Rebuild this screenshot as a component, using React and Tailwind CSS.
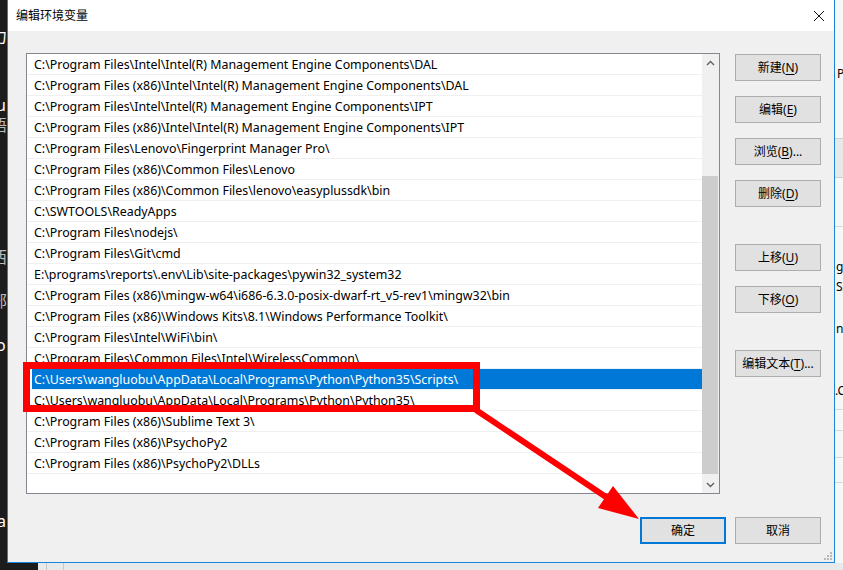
const paths = [
  "C:\\Program Files\\Intel\\Intel(R) Management Engine Components\\DAL",
  "C:\\Program Files (x86)\\Intel\\Intel(R) Management Engine Components\\DAL",
  "C:\\Program Files\\Intel\\Intel(R) Management Engine Components\\IPT",
  "C:\\Program Files (x86)\\Intel\\Intel(R) Management Engine Components\\IPT",
  "C:\\Program Files\\Lenovo\\Fingerprint Manager Pro\\",
  "C:\\Program Files (x86)\\Common Files\\Lenovo",
  "C:\\Program Files (x86)\\Common Files\\lenovo\\easyplussdk\\bin",
  "C:\\SWTOOLS\\ReadyApps",
  "C:\\Program Files\\nodejs\\",
  "C:\\Program Files\\Git\\cmd",
  "E:\\programs\\reports\\.env\\Lib\\site-packages\\pywin32_system32",
  "C:\\Program Files (x86)\\mingw-w64\\i686-6.3.0-posix-dwarf-rt_v5-rev1\\mingw32\\bin",
  "C:\\Program Files (x86)\\Windows Kits\\8.1\\Windows Performance Toolkit\\",
  "C:\\Program Files\\Intel\\WiFi\\bin\\",
  "C:\\Program Files\\Common Files\\Intel\\WirelessCommon\\",
  "C:\\Users\\wangluobu\\AppData\\Local\\Programs\\Python\\Python35\\Scripts\\",
  "C:\\Users\\wangluobu\\AppData\\Local\\Programs\\Python\\Python35\\",
  "C:\\Program Files (x86)\\Sublime Text 3\\",
  "C:\\Program Files (x86)\\PsychoPy2",
  "C:\\Program Files (x86)\\PsychoPy2\\DLLs",
]

const SELECTED = 15

function Btn({ label, hot, suffix = "", className = "" }) {
  return (
    <div
      className={`w-[86px] h-[27px] bg-[#e1e1e1] flex items-center justify-center text-[12px] text-black ${className}`}
    >
      <span>
        {label}
        {hot && (
          <>
            (<span className="underline underline-offset-2">{hot}</span>)
          </>
        )}
        {suffix}
      </span>
    </div>
  )
}

function Chevron({ up }) {
  return (
    <svg width="9" height="6" viewBox="0 0 9 6" fill="none" stroke="#606060" strokeWidth="1.4">
      {up ? <path d="M1 5 L4.5 1.5 L8 5" /> : <path d="M1 1 L4.5 4.5 L8 1" />}
    </svg>
  )
}

export default function App() {
  return (
    <div className="relative w-[843px] h-[570px] overflow-hidden flex flex-col bg-[#1c1c1c] font-['Noto_Sans','Noto_Sans_CJK_SC',sans-serif]">
      <div className="flex h-[563px]">
        {/* left background window sliver */}
        <div className="w-[7px] overflow-hidden bg-[#1c1c1c] text-white text-[16px] leading-none">
          <div className="mt-[28px] -ml-[9px]">力</div>
          <div className="mt-[53px] -ml-[4px]">u</div>
          <div className="mt-[4px] -ml-[9px] text-[#bbbbbb]">语</div>
          <div className="mt-[116px] -ml-[9px] text-[#bbbbbb]">西</div>
          <div className="mt-[28px] -ml-[9px] text-[#bbbbbb]">部</div>
          <div className="mt-[28px] -ml-[4px]">o</div>
          <div className="mt-[160px] -ml-[3px]">a</div>
        </div>

        {/* dialog */}
        <div className="relative w-[828px] flex flex-col border-l border-r border-b border-[#1883d7] bg-[#f0f0f0]">
          {/* title bar */}
          <div className="h-[31px] bg-white flex items-center justify-between pl-[8px] pr-[9px] shrink-0">
            <span className="text-[12px] text-black">编辑环境变量</span>
            <svg width="12" height="12" viewBox="0 0 12 12" stroke="#111" strokeWidth="1">
              <path d="M1 1 L11 11 M11 1 L1 11" />
            </svg>
          </div>

          <div className="flex pl-[18px] pt-[22px]">
            {/* list */}
            <div className="w-[694px] h-[441px] border border-[#828790] bg-white flex">
              <div className="flex-1">
                {paths.map((p, i) => (
                  <div key={i} className="h-[21px] border-b border-[#f0f0f0] flex">
                    <div
                      className={`flex-1 ml-[5px] pl-[2px] pt-[3px] flex items-center text-[12.4px] whitespace-nowrap ${
                        i === SELECTED ? "bg-[#0078d7] text-white" : "text-black"
                      }`}
                    >
                      {p}
                    </div>
                  </div>
                ))}
              </div>
              {/* scrollbar */}
              <div className="w-[17px] bg-[#f0f0f0] flex flex-col">
                <div className="h-[17px] flex items-center justify-center">
                  <Chevron up />
                </div>
                <div className="h-[105px]" />
                <div className="h-[298px] bg-[#cdcdcd] mr-[1px]" />
                <div className="flex-1" />
                <div className="h-[17px] flex items-center justify-center">
                  <Chevron />
                </div>
              </div>
            </div>

            {/* side buttons */}
            <div className="ml-[15px] pt-[1px] flex flex-col">
              <Btn label="新建" hot="N" className="border border-[#adadad]" />
              <Btn label="编辑" hot="E" className="border border-[#adadad] mt-[15px]" />
              <Btn label="浏览" hot="B" suffix="..." className="border border-[#adadad] mt-[15px]" />
              <Btn label="删除" hot="D" className="border border-[#adadad] mt-[15px]" />
              <Btn label="上移" hot="U" className="border border-[#adadad] mt-[37px]" />
              <Btn label="下移" hot="O" className="border border-[#adadad] mt-[15px]" />
              <Btn label="编辑文本" hot="T" suffix="..." className="border border-[#adadad] mt-[37px]" />
            </div>
          </div>

          {/* bottom buttons */}
          <div className="flex justify-end gap-[9px] pr-[13px] mt-[23px]">
            <Btn label="确定" className="border-2 border-[#0078d7]" />
            <Btn label="取消" className="border border-[#adadad]" />
          </div>

          {/* size grip */}
          <svg className="absolute right-[2px] bottom-[2px]" width="8" height="8" viewBox="0 0 8 8" fill="#b8b8b8">
            <rect x="6" y="0" width="2" height="2" />
            <rect x="3" y="3" width="2" height="2" />
            <rect x="6" y="3" width="2" height="2" />
            <rect x="0" y="6" width="2" height="2" />
            <rect x="3" y="6" width="2" height="2" />
            <rect x="6" y="6" width="2" height="2" />
          </svg>
        </div>

        {/* right background window sliver */}
        <div className="w-[8px] overflow-hidden bg-[#f7f7f7] text-[12px] text-black leading-none flex flex-col">
          <div className="mt-[68px] ml-[2px]">Py</div>
          <div className="mt-[58px] h-[40px] bg-[#e8e8e8] border-t border-b border-[#d0d0d0]" />
          <div className="mt-[48px] h-px bg-[#d6d6d6]" />
          <div className="mt-[34px] ml-[1px]">g:</div>
          <div className="mt-[8px] ml-[1px]">SI</div>
          <div className="mt-[30px] ml-[1px]">nt</div>
          <div className="mt-[50px]">.C</div>
          <div className="mt-[12px] h-px bg-[#d6d6d6]" />
          <div className="mt-[20px] h-px bg-[#d6d6d6]" />
          <div className="mt-[26px] h-px bg-[#d6d6d6]" />
          <div className="mt-[24px] h-px bg-[#d6d6d6]" />
        </div>
      </div>

      {/* bottom background strip */}
      <div className="h-[7px] flex">
        <div className="w-[38px] bg-[#1c1c1c]" />
        <div className="flex-1 bg-[#e9e9e9] flex">
          <div className="ml-[8px] w-px bg-[#c8c8c8]" />
          <div className="ml-[16px] w-px bg-[#c8c8c8]" />
        </div>
      </div>

      {/* red annotation */}
      <svg className="absolute inset-0 pointer-events-none" width="843" height="570" viewBox="0 0 843 570">
        <rect x="26.5" y="365.5" width="450" height="43" fill="none" stroke="#ff0000" strokeWidth="7" />
        <line x1="476" y1="410" x2="612" y2="501" stroke="#ff0000" strokeWidth="6" />
        <polygon points="639,519 598,508 613,486" fill="#ff0000" />
      </svg>
    </div>
  )
}
